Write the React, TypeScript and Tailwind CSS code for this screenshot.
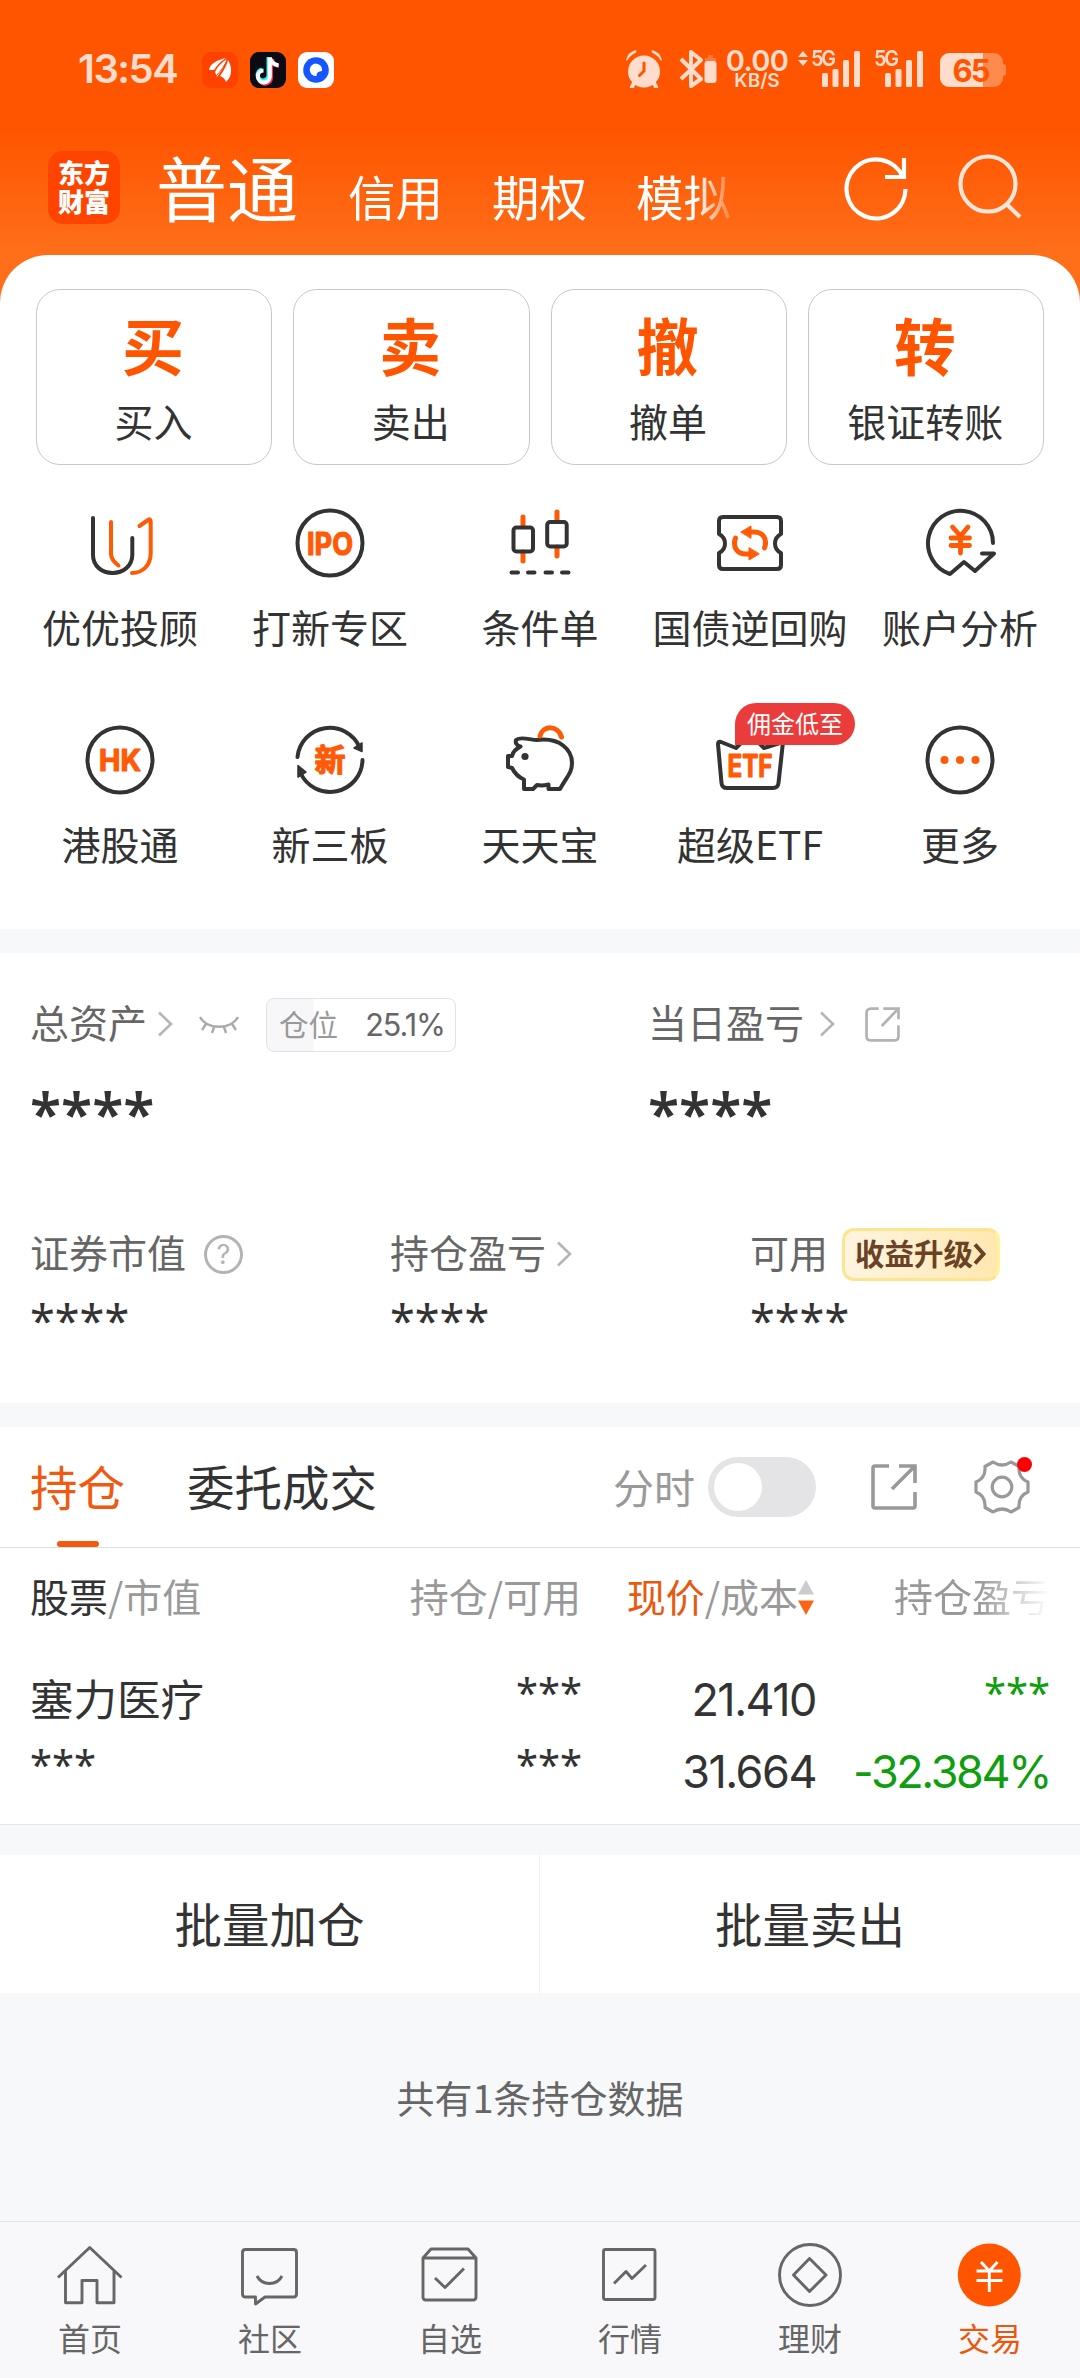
import React from 'react';

const ORANGE = '#ff5a05';
const DARK = '#333333';

interface Shortcut {
  label: string;
  icon: React.ReactNode;
  badge?: string;
}

interface NavItem {
  label: string;
  icon: React.ReactNode;
  active?: boolean;
}

// Every shortcut icon is drawn around its own centre
const ShortcutIcon: React.FC<{ children: React.ReactNode }> = ({ children }) => (
  <svg
    className="w-[76px] h-[76px]"
    viewBox="-38 -38 76 76"
    fill="none"
    stroke={DARK}
    strokeWidth="4"
    strokeLinecap="round"
    strokeLinejoin="round"
  >
    {children}
  </svg>
);

const IconText: React.FC<{ y: number; size: number; width: number; children: string }> = ({ y, size, width, children }) => (
  <text
    x={-width / 2}
    y={y}
    fontSize={size}
    textLength={width}
    lengthAdjust="spacingAndGlyphs"
    fill={ORANGE}
    stroke={ORANGE}
    strokeWidth="1.200"
    className="font-['Inter','Noto_Sans_CJK_SC',sans-serif] font-bold"
  >
    {children}
  </text>
);

const shortcuts: Shortcut[] = [
  {
    label: '优优投顾',
    icon: (
      <ShortcutIcon>
        <path d="M-27 -25V12C-27 23 -18 30 -7.500 30S12.300 23 12.300 12V-5" />
        <path stroke={ORANGE} d="M-9 -21V11Q-9 17 -1.500 22.500M19.500 -17L28 -23Q30.700 -25 30.700 -21V10C30.700 22 23 30 12 30" />
      </ShortcutIcon>
    ),
  },
  {
    label: '打新专区',
    icon: (
      <ShortcutIcon>
        <circle r="32.500" />
        <IconText y={11.5} size={31} width={46}>IPO</IconText>
      </ShortcutIcon>
    ),
  },
  {
    label: '条件单',
    icon: (
      <ShortcutIcon>
        <path stroke={ORANGE} strokeWidth="5" d="M-17 -26V-17M-17 9V18M17 -31V-22M17 4V13" />
        <rect x="-26.500" y="-15.500" width="19.500" height="24" rx="3" />
        <rect x="7.200" y="-21" width="19.500" height="24.500" rx="3" />
        <path d="M-28.500 29.500H-22M-12 29.500H-5.500M5.500 29.500H12M22 29.500H28.500" />
      </ShortcutIcon>
    ),
  },
  {
    label: '国债逆回购',
    icon: (
      <ShortcutIcon>
        <path d="M-31 -22Q-31 -26 -27 -26H27Q31 -26 31 -22V-9C23 -5 23 6 31 10V22Q31 26 27 26H-27Q-31 26 -31 22V10C-23 6 -23 -5 -31 -9Z" />
        <path stroke={ORANGE} strokeWidth="5" d="M14.500 5C18 -5 12 -11 4 -11H0M-14.500 -5C-18 5 -12 11 -4 11H0" />
        <path fill={ORANGE} stroke={ORANGE} strokeWidth="1" d="M-9 -11L1 -17V-5ZM9 11L-1 17V5Z" />
      </ShortcutIcon>
    ),
  },
  {
    label: '账户分析',
    icon: (
      <ShortcutIcon>
        <path d="M33 0A32.500 32.500 0 1 0 -10 31L4 19L15 28L34 10.500H22" />
        <path stroke={ORANGE} strokeWidth="4.800" d="M-7.500 -16L0.500 -7L8 -16M0.500 -7V10M-9 -5H9.500M-9 2.500H9.500" />
      </ShortcutIcon>
    ),
  },
  {
    label: '港股通',
    icon: (
      <ShortcutIcon>
        <circle r="32.500" />
        <IconText y={11} size={30} width={42}>HK</IconText>
      </ShortcutIcon>
    ),
  },
  {
    label: '新三板',
    icon: (
      <ShortcutIcon>
        <path d="M-32.500 -3A32.500 32.500 0 0 1 29.500 -13M32.500 0A32.500 32.500 0 0 1 -29.500 13" />
        <path fill={DARK} strokeWidth="1.500" d="M24 -12L32 -17L32 -8.500ZM-24 12L-32 17L-32 5.500Z" />
        <IconText y={11} size={31} width={31}>新</IconText>
      </ShortcutIcon>
    ),
  },
  {
    label: '天天宝',
    icon: (
      <ShortcutIcon>
        <path d="M-24 -20C-19 -24 -10 -20 -3 -20C20 -23 32 -10 32 3C32 13 27 16 20 29H8.500V24.500Q2 26 -3 25L-7 29H-16V19.500C-22 17 -26 12 -28 8L-32 7V-4H-28C-27 -9 -24 -11 -19.500 -13.500C-23 -14 -25 -17 -24 -20Z" />
        <circle cx="-15" cy="-3.500" r="3.600" fill={DARK} stroke="none" />
        <path stroke={ORANGE} strokeWidth="5" d="M0 -24C3 -35 18 -35 21.500 -23" />
      </ShortcutIcon>
    ),
  },
  {
    label: '超级ETF',
    badge: '佣金低至',
    icon: (
      <ShortcutIcon>
        <path d="M-32 -16Q-32 -19 -29 -18L-14 -12L0 -26L14 -12L33 -18L28.500 23Q28 28 23 28H-23Q-28 28 -28.500 23Z" />
        <IconText y={17} size={31} width={45}>ETF</IconText>
      </ShortcutIcon>
    ),
  },
  {
    label: '更多',
    icon: (
      <ShortcutIcon>
        <circle r="32.500" />
        <g fill={ORANGE} stroke="none">
          <circle cx="-15.500" r="4" />
          <circle r="4" />
          <circle cx="15.500" r="4" />
        </g>
      </ShortcutIcon>
    ),
  },
];

const quickActions = [
  { glyph: '买', label: '买入' },
  { glyph: '卖', label: '卖出' },
  { glyph: '撤', label: '撤单' },
  { glyph: '转', label: '银证转账' },
];

const navItems: NavItem[] = [
  {
    label: '首页',
    icon: <path d="M-32 2.500L-0.300 -27.500L31.500 2.500M-24.500 -4V27.700H-8V5.500H7V27.700H24V-4" />,
  },
  {
    label: '社区',
    icon: (
      <path d="M-24.500 -25.500H23.500Q26.500 -25.500 26.500 -22.500V19Q26.500 22 23.500 22H-5L-14.500 29V22H-24.500Q-27.500 22 -27.500 19V-22.500Q-27.500 -25.500 -24.500 -25.500ZM-13 1C-8 11 7 11 12 1" />
    ),
  },
  {
    label: '自选',
    icon: (
      <path d="M-27 -17L-19 -26H18L26 -17V22Q26 25 23 25H-24Q-27 25 -27 22ZM-27 -17H26M-15 3L-5 12.500L14 -6.500" />
    ),
  },
  {
    label: '行情',
    icon: (
      <g>
        <rect x="-26.500" y="-25.500" width="51.500" height="50" rx="2" />
        <path d="M-16 8.500L-4 -3.500L2 3.500L16 -10" />
      </g>
    ),
  },
  {
    label: '理财',
    icon: (
      <g>
        <circle r="30.500" />
        <path d="M-0.500 -16.500L16 0L-0.500 16.500L-16.500 0Z" />
      </g>
    ),
  },
  {
    label: '交易',
    active: true,
    icon: (
      <g>
        <circle cx="-0.700" r="31.500" fill="#ff5500" stroke="none" />
        <path stroke="#fff" d="M-9 -13L-0.700 -4L7.500 -13M-0.700 -4V17M-13.500 -4H12.500M-13.500 5.500H12.500" />
      </g>
    ),
  },
];

const ChevronRight: React.FC<{ className?: string }> = ({ className }) => (
  <svg className={`w-[18px] h-[26px] ${className ?? ''}`} viewBox="0 0 18 26" fill="none" stroke="#b5b5b5" strokeWidth="2.600">
    <path d="M3 1.500L15 13L3 24.500" />
  </svg>
);

const ShareBox: React.FC<{ className: string; rx?: boolean }> = ({ className, rx }) => (
  <svg className={className} viewBox="0 0 46 46" fill="none" stroke="currentColor" strokeWidth="3.600">
    <path
      d={
        rx
          ? 'M18 2H8Q2 2 2 8V38Q2 44 8 44H38Q44 44 44 38V24M24 2H44V16M43 3L22 25'
          : 'M18 2H4Q2 2 2 4V42Q2 44 4 44H42Q44 44 44 42V28M28 2H44V19M43 3L21 25'
      }
    />
  </svg>
);

const SignalBars = () => (
  <svg className="w-[39px] h-[38px]" viewBox="0 0 39 38" fill="currentColor">
    <rect x="0" y="23" width="6" height="14" rx="1.500" />
    <rect x="10.500" y="19" width="6" height="18" rx="1.500" />
    <rect x="21" y="10" width="6" height="27" rx="1.500" />
    <rect x="32" y="1" width="6" height="36" rx="1.500" />
  </svg>
);

const StatusBar = () => (
  <div className="h-[140px] flex items-start pt-[50px] pl-[78px] pr-[73px] text-[#ffdccc] font-['Inter',sans-serif]">
    <span className="w-[124px] text-[40px] leading-[38px] font-semibold tracking-[-1.5px] whitespace-nowrap">13:54</span>
    <div className="flex gap-3 pt-[2px]">
      <svg className="w-9 h-9" viewBox="0 0 36 36">
        <rect width="36" height="36" rx="9" fill="#ff4200" />
        <g fill="#fff">
          <path d="M7 18C8 11 16 8 24 6C19 9 15 13 12 18Z" />
          <path d="M13 20C16 14 20 10 25 7C23 13 20 18 15 25Z" />
          <path d="M18 24C22 18 25 13 26 8C30 14 31 24 24 30C23 27 21 25 18 24Z" />
        </g>
        <path d="M14 24C19 19 23 13 25.500 7" stroke="#ff4200" fill="none" />
      </svg>
      <svg className="w-9 h-9" viewBox="0 0 36 36" fill="none" strokeWidth="4">
        <rect width="36" height="36" rx="9" fill="#0b0b14" />
        <path stroke="#25f4ee" d="M18.500 5V24A5.500 5.500 0 1 1 12 17.500M18.500 6Q20 12 27 13" />
        <path stroke="#fe2c55" d="M21 7V26A6 6 0 0 1 10 29M22 7Q23 13 29 14" />
        <path stroke="#fff" d="M19.800 5.500V25A6 6 0 1 1 13.500 18.500M20 6Q22 12.500 28.500 13.200" />
      </svg>
      <svg className="w-9 h-9" viewBox="0 0 36 36">
        <rect width="36" height="36" rx="9" fill="#fff" />
        <circle cx="18" cy="18" r="12.800" fill="#1456ff" />
        <path fill="#fff" d="M24 19A6.200 6.200 0 1 0 18.500 24Q18 19.500 24 19Z" />
      </svg>
    </div>
    <div className="ml-auto flex items-start">
      <svg className="w-[38px] h-[38px]" viewBox="0 0 38 38" fill="currentColor">
        <circle cx="19" cy="21.500" r="16" />
        <path d="M1 10Q3 2 11 0Q12 2 10.500 3Q5 5.500 3 9.500Q2 11 1 10ZM37 10Q35 2 27 0Q26 2 27.500 3Q33 5.500 35 9.500Q36 11 37 10Z" />
        <path d="M9 33L7 37M29 33L31 37" stroke="currentColor" strokeWidth="4" strokeLinecap="round" />
        <path d="M19 13V21L14.500 25.500" fill="none" stroke="#ff5500" strokeWidth="3" strokeLinecap="round" />
      </svg>
      <svg className="ml-4 w-[38px] h-[38px]" viewBox="0 0 38 38" fill="none">
        <path d="M2 9L22 29L12 36V2L22 10L2 29" stroke="currentColor" strokeWidth="4" strokeLinejoin="round" />
        <path d="M29 5H34V8H37V12H26V8H29Z" fill="#ff7a3a" />
        <rect x="25.500" y="11" width="12" height="22" rx="3" fill="currentColor" />
      </svg>
      <div className="ml-[9px] mr-px w-[62px] flex flex-col items-center font-semibold">
        <span className="text-[29px] leading-[22px] tracking-[-0.6px]">0.00</span>
        <span className="text-[19px] leading-[17px]">KB/S</span>
      </div>
      <svg className="ml-[9px] w-[10px] h-[17px]" viewBox="0 0 10 17" fill="currentColor">
        <path d="M5 1L10 7H0ZM5 16L10 10H0Z" />
      </svg>
      <div className="relative ml-[14px]">
        <span className="absolute -left-[11px] top-0 text-[22px] leading-[17px] font-semibold tracking-[-2.5px] origin-left scale-x-90">5G</span>
        <SignalBars />
      </div>
      <div className="relative ml-6">
        <span className="absolute -left-[11px] top-0 text-[22px] leading-[17px] font-semibold tracking-[-2.5px] origin-left scale-x-90">5G</span>
        <SignalBars />
      </div>
      <div className="relative ml-4 mt-[3px] w-[67px] h-[34px] flex items-center">
        <div className="w-[63px] h-[34px] rounded-[9px] bg-[linear-gradient(to_right,#ffdccc_69%,#ff8a4d_69%)] flex items-center justify-center">
          <span className="text-[#ff5500] text-[31px] leading-none font-bold tracking-[-2px] -ml-[2px]">65</span>
        </div>
        <div className="w-[3px] h-[12px] rounded-r-[3px] bg-[#ff8a4d]" />
      </div>
    </div>
  </div>
);

const TopTabs = () => (
  <div className="h-[115px] flex pl-12 text-white">
    <div className="mt-[11px] w-[72px] h-[73px] rounded-[15px] bg-[#ff4400] flex flex-col items-center justify-center font-black text-[26px] leading-[29px]">
      <span className="-mt-[3px]">东方</span>
      <span>财富</span>
    </div>
    <div className="ml-[36px] w-[582px] h-[100px] flex items-start gap-[49px] whitespace-nowrap [mask-image:linear-gradient(to_right,black_93%,transparent_100%)]">
      <span className="text-[71px] leading-[100px] w-[143px] -mt-[5px]">普通</span>
      <span className="text-[47.5px] leading-[60px] w-[95px] mt-[26px]">信用</span>
      <span className="text-[47.5px] leading-[60px] w-[95px] mt-[26px]">期权</span>
      <span className="text-[47.5px] leading-[60px] w-[95px] mt-[26px]">模拟</span>
    </div>
    <svg className="ml-[105px] mt-[13px] w-[66px] h-[68px]" viewBox="0 0 66 68" fill="none" stroke="#fff" strokeWidth="4.200">
      <path d="M62.500 36A29.500 29.500 0 1 1 60 24" />
      <path d="M61 5V24H42" />
    </svg>
    <svg className="ml-[48px] mt-[14px] w-[66px] h-[68px]" viewBox="0 0 66 68" fill="none" stroke="#ffe6d9" strokeWidth="4.200">
      <circle cx="31" cy="30" r="27.500" />
      <path d="M49.500 50L63 63" />
    </svg>
  </div>
);

const Stars: React.FC<{ text: string; className: string }> = ({ text, className }) => (
  <span className={`font-['Noto_Sans',sans-serif] leading-none ${className}`}>{text}</span>
);

const AssetSummary = () => (
  <section className="h-[450px] bg-white pl-[30px] text-[39px] leading-none text-[#666]">
    <div className="flex h-[142px] items-center">
      <div className="w-[618px] flex items-center">
        <span className="-mt-[5px]">总资产</span>
        <ChevronRight className="ml-[9px]" />
        <svg className="ml-[24px] w-[42px] h-[22px]" viewBox="0 0 42 22" fill="none" stroke="#aaa" strokeWidth="2.400">
          <path d="M2 4C9 17 33 17 40 4M8 11L4 17M16 14L14 20M26 14L28 20M34 11L38 17" />
        </svg>
        <div className="ml-[26px] mt-[2px] w-[190px] h-[54px] rounded-[8px] border border-[#e2e2e4] bg-[linear-gradient(to_right,#f7f7fa_25.1%,#fff_25.1%)] flex items-center justify-between pl-3 pr-[10px] text-[29.5px]">
          <span className="text-[#999] -mt-[3px]">仓位</span>
          <span className="font-['Inter',sans-serif] text-[30.5px] tracking-[-1px]">25.1%</span>
        </div>
      </div>
      <span className="-mt-[5px]">当日盈亏</span>
      <ChevronRight className="ml-[14px]" />
      <ShareBox rx className="ml-[29px] mt-px w-[35px] h-[35px] text-[#b3b3b3]" />
    </div>
    <div className="flex h-[92px] -mt-[10px] mb-[10px] text-[#333] font-semibold">
      <Stars text="****" className="w-[618px] text-[57px]" />
      <Stars text="****" className="text-[57px]" />
    </div>
    <div className="flex h-[134px] items-center">
      <div className="w-[360px] flex items-center">
        <span className="-mt-[6px]">证券市值</span>
        <span className="ml-[18px] w-[39px] h-[39px] rounded-full border-[3px] border-[#b3b3b3] flex items-center justify-center text-[27px] text-[#b3b3b3] font-['Inter',sans-serif]">?</span>
      </div>
      <div className="w-[360px] flex items-center">
        <span className="-mt-[6px]">持仓盈亏</span>
        <ChevronRight className="ml-[9px]" />
      </div>
      <span className="-mt-[6px]">可用</span>
      <div className="ml-[14px] w-[158px] h-[53px] rounded-[12px] border-[3px] border-[#fde48f] border-r-[#fff49a] bg-[linear-gradient(to_right,#fff5e0,#ffe7b0)] flex items-center justify-center text-[29.5px] font-bold text-[#6b4226]">
        <span className="-mt-[3px]">收益升级</span>
        <svg className="w-[14px] h-[24px]" viewBox="0 0 14 24" fill="none" stroke="#6b4226" strokeWidth="4">
          <path d="M2 2.500L10.500 12L2 21.500" />
        </svg>
      </div>
    </div>
    <div className="flex text-[45px] text-[#333] -mt-[23px]">
      <Stars text="****" className="w-[360px]" />
      <Stars text="****" className="w-[360px]" />
      <Stars text="****" className="" />
    </div>
  </section>
);

const PositionTabs = () => (
  <div className="h-[121px] border-b border-[#dedede] flex items-center pl-[30px] pr-[50px] text-[47.5px] leading-none relative">
    <div className="relative text-[#f0590f]">
      <span className="relative -top-px">持仓</span>
      <div className="absolute left-[27px] top-[78px] w-[42px] h-[6px] rounded-[3px] bg-[#f0590f]" />
    </div>
    <span className="ml-[62px] text-[#333] relative -top-px">委托成交</span>
    <span className="ml-auto text-[41px] text-[#999] relative -top-[1px]">分时</span>
    <div className="ml-[13px] w-[108px] h-[60px] rounded-full bg-[#e4e4e6] p-[6px]">
      <div className="w-12 h-12 rounded-full bg-white" />
    </div>
    <ShareBox className="ml-[55px] w-[46px] h-[46px] text-[#999]" />
    <div className="relative ml-[57px]">
      <svg className="w-[56px] h-[56px]" viewBox="-28 -28 56 56" fill="none" stroke="#999" strokeWidth="3.200" strokeLinejoin="round">
        <path d="M-9 -25Q0 -19 9 -25L17 -20.500Q16 -9 26 -5V5Q16 9 17 20.500L9 25Q0 19 -9 25L-17 20.500Q-16 9 -26 5V-5Q-16 -9 -17 -20.500Z" />
        <circle r="9.800" />
      </svg>
      <div className="absolute right-[-2px] top-[-2px] w-[15px] h-[15px] rounded-full bg-[#ff0000]" />
    </div>
  </div>
);

const PositionTable = () => (
  <div className="h-[277px] border-b border-[#e8e8e8] pl-[30px] pr-[31px] leading-none text-[#333]">
    <div className="h-[94px] flex items-center text-[39px] text-[#999]">
      <div className="w-[280px]"><span className="text-[#333]">股票</span>/市值</div>
      <div className="w-[271px] text-right">持仓/可用</div>
      <div className="w-[233px] flex items-center justify-end">
        <span className="whitespace-nowrap"><span className="text-[#e8590f]">现价</span>/成本</span>
        <svg className="w-4 h-[35px] mt-1" viewBox="0 0 16 35">
          <path d="M8 0L16 14.500H0Z" fill="#ccc" />
          <path d="M0 20.500H16L8 35Z" fill="#fa6414" />
        </svg>
      </div>
      <div className="ml-auto w-[155px] whitespace-nowrap [mask-image:linear-gradient(to_right,black_55%,transparent_100%)]">持仓盈亏</div>
    </div>
    <div className="h-[72px] mt-[20px] flex items-start">
      <span className="w-[280px] text-[43.5px] pt-[14px]">塞力医疗</span>
      <Stars text="***" className="w-[272px] text-right text-[40px] pt-[10px]" />
      <span className="w-[234px] text-right text-[45px] pt-[15px] font-['Inter',sans-serif] tracking-[-1.5px]">21.410</span>
      <Stars text="***" className="ml-auto -mr-px text-[40px] pt-[10px] text-[#0e9e0e]" />
    </div>
    <div className="h-[72px] flex items-start">
      <Stars text="***" className="w-[280px] text-[40px] pt-[10px]" />
      <Stars text="***" className="w-[272px] text-right text-[40px] pt-[10px]" />
      <span className="w-[234px] text-right text-[45px] pt-[15px] font-['Inter',sans-serif] tracking-[-1.5px]">31.664</span>
      <span className="ml-auto -mr-px text-[45px] pt-[15px] text-[#0e9e0e] font-['Inter',sans-serif] tracking-[-2.4px] whitespace-nowrap">-32.384%</span>
    </div>
  </div>
);

const BottomNav = () => (
  <nav className="h-[157px] border-t border-[#e4e4e6] bg-[#f8f8fa] grid grid-cols-6">
    {navItems.map((item) => (
      <div key={item.label} className="flex flex-col items-center pt-[17px]">
        <svg
          className="w-[72px] h-[72px]"
          viewBox="-36 -36 72 72"
          fill="none"
          stroke="#666"
          strokeWidth="2.900"
          strokeLinejoin="round"
        >
          {item.icon}
        </svg>
        <span className={`mt-[8px] text-[32px] leading-[36px] ${item.active ? 'text-[#e8590f]' : 'text-[#666]'}`}>
          {item.label}
        </span>
      </div>
    ))}
  </nav>
);

export default function App() {
  return (
    <div className="w-[1080px] h-[2378px] overflow-hidden bg-[#f7f8fa] flex flex-col font-['Noto_Sans_CJK_SC',sans-serif]">
      {/* Header and shortcuts */}
      <div className="h-[929px] shrink-0 bg-[linear-gradient(to_bottom,#ff5500_0px,#ff5500_130px,#ff6f1a_255px)]">
        <StatusBar />
        <TopTabs />
        <section className="h-[674px] bg-white rounded-t-[48px] pt-[34px]">
          <div className="grid grid-cols-4 gap-[21px] px-9">
            {quickActions.map((action) => (
              <div key={action.label} className="h-[176px] rounded-[24px] border border-[#c8c8c8] flex flex-col items-center leading-none">
                <span className="mt-[21px] -ml-[2px] text-[62px] leading-[66px] font-bold text-[#ff5500]">{action.glyph}</span>
                <span className="mt-[22px] -ml-px text-[39px] leading-[42px] text-[#333]">{action.label}</span>
              </div>
            ))}
          </div>
          <div className="mt-[40px] px-[15px] grid grid-cols-5">
            {shortcuts.map((item) => (
              <div key={item.label} className="relative h-[217px] flex flex-col items-center">
                {item.icon}
                <span className="mt-[24px] text-[39px] leading-[42px] text-[#333] whitespace-nowrap">{item.label}</span>
                {item.badge && (
                  <div className="absolute left-[90px] -top-[19px] w-[120px] h-[42px] rounded-[21px] rounded-bl-none bg-[#eb3c3c] flex items-center justify-center text-[24px] leading-none text-white">
                    <span className="-mt-[3px]">{item.badge}</span>
                  </div>
                )}
              </div>
            ))}
          </div>
        </section>
      </div>

      <div className="h-6 shrink-0" />
      <AssetSummary />
      <div className="h-6 shrink-0" />

      {/* Positions */}
      <section className="bg-white shrink-0">
        <PositionTabs />
        <PositionTable />
      </section>

      {/* Batch actions */}
      <div className="mt-[30px] h-[138px] shrink-0 bg-white grid grid-cols-2 text-[47.5px] leading-none text-[#333]">
        <div className="flex items-center justify-center border-r border-[#f3f3f5]"><span className="-mt-[3px]">批量加仓</span></div>
        <div className="flex items-center justify-center"><span className="-mt-[3px]">批量卖出</span></div>
      </div>

      <div className="flex-1 flex justify-center pt-[83px] text-[38px] leading-[42px] text-[#666]">共有1条持仓数据</div>
      <BottomNav />
    </div>
  );
}
